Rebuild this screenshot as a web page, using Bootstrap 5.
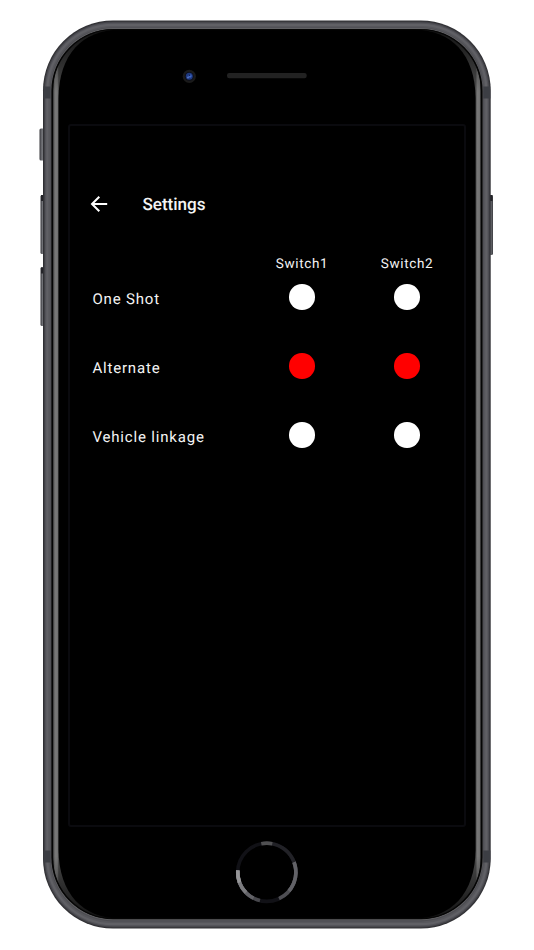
<!DOCTYPE html>
<html lang="en">
<head>
<meta charset="utf-8">
<meta name="viewport" content="width=device-width, initial-scale=1">
<title>Settings</title>
<link href="https://cdn.jsdelivr.net/npm/bootstrap@5.3.0/dist/css/bootstrap.min.css" rel="stylesheet">
<style>
body{font-family:Roboto,"Liberation Sans",sans-serif;background:#fff;color:#f4f4f4;text-rendering:geometricPrecision}
.phone{width:534px;height:950px}
.shell{z-index:0}
.screen{width:398px;height:703px;margin:123.5px 0 0 68px;border:2px solid #0a0a0e;border-radius:3px;z-index:1;padding-top:64px}
.topbar{height:28px;padding-left:18.5px;gap:34px}
.title{font-size:17.1px;font-weight:500;line-height:28px;margin:0;padding-top:2px;letter-spacing:-.03px}
.heads{height:20px;margin-top:35px;padding-left:179.5px;font-size:13.5px;letter-spacing:.66px;line-height:22px}
.cell{width:105px;flex:none}
.option{height:69px}
.option-list{margin-top:-9.8px}
.caption{width:179.5px;flex:none;padding:3.6px 0 0 22.4px;font-size:15px;letter-spacing:.82px;line-height:20px;white-space:nowrap}
.dot{width:25.5px;height:25.5px;background:#fff;border:0;padding:0}
.dot.on{background:#f00}
</style>
<script src="https://cdn.jsdelivr.net/npm/bootstrap@5.3.0/dist/js/bootstrap.bundle.min.js"></script>
</head>
<body>
<div class="phone position-relative overflow-hidden">
<svg class="shell position-absolute top-0 start-0" width="534" height="950" viewBox="0 0 534 950" aria-hidden="true">
<defs>
<linearGradient id="lip" gradientUnits="userSpaceOnUse" x1="53" y1="0" x2="481.5" y2="0"><stop offset="0" stop-color="#444"/><stop offset=".005" stop-color="#777"/><stop offset=".010" stop-color="#777"/><stop offset=".0135" stop-color="#484848"/><stop offset=".9865" stop-color="#4b4b4b"/><stop offset=".990" stop-color="#777"/><stop offset=".995" stop-color="#747474"/><stop offset="1" stop-color="#444"/></linearGradient>
<linearGradient id="fade" x1="0" x2="0" y1="0" y2="1"><stop offset="0" stop-opacity=".75"/><stop offset=".025" stop-opacity=".5"/><stop offset=".07" stop-opacity="0"/><stop offset=".93" stop-opacity="0"/><stop offset=".975" stop-opacity=".5"/><stop offset="1" stop-opacity=".75"/></linearGradient>
<linearGradient id="key" x1="0" x2="1" y1="0" y2="0"><stop offset="0" stop-color="#35353a"/><stop offset=".45" stop-color="#77787d"/><stop offset="1" stop-color="#3b3c40"/></linearGradient>
</defs>
<g fill="url(#key)">
<rect x="39.5" y="128.5" width="6" height="32" rx="1.5"/>
<rect x="40.5" y="195" width="5" height="59" rx="1.5"/>
<rect x="40.5" y="267" width="5" height="59" rx="1.5"/>
<rect x="488" y="195" width="5" height="60" rx="1.5"/>
</g>
<g fill="#242429"><rect x="41" y="195" width="3" height="6"/><rect x="41" y="267.5" width="3" height="6"/><rect x="490" y="195" width="2.5" height="6"/></g>
<rect x="43" y="20.5" width="447.7" height="908" rx="70" fill="#303034"/>
<rect x="44" y="21.5" width="445.7" height="906" rx="69" fill="#404045"/>
<rect x="45" y="22.5" width="443.7" height="904" rx="68" fill="#525258"/>
<rect x="46.2" y="23.7" width="441.3" height="901.6" rx="66.8" fill="#606065"/>
<rect x="48.4" y="25.9" width="436.9" height="897.2" rx="64.6" fill="#57575c"/>
<rect x="50" y="27.4" width="433.7" height="894" rx="63" fill="#4d4d52"/>
<rect x="50.8" y="28.1" width="432.1" height="892.2" rx="62.4" fill="#606063"/>
<g fill="#3c3e44"><rect x="43.5" y="86.5" width="7" height="12"/><rect x="483.3" y="86.5" width="7" height="12"/><rect x="43.5" y="850.5" width="7" height="12"/><rect x="483.3" y="850.5" width="7" height="12"/></g>
<rect x="51.3" y="29" width="431.3" height="890.2" rx="62" fill="#080808"/>
<rect x="53" y="29.8" width="427.8" height="888.6" rx="60" fill="url(#lip)"/>
<rect x="53" y="29.8" width="427.8" height="888.6" rx="60" fill="url(#fade)"/>
<path d="M58.5 98C59 55 82 29.6 121 29.6H413C452 29.6 475 55 475.6 98V850C475 893 452 918.6 413 918.6H121C82 918.6 59 893 58.5 850Z" fill="#000"/>
<rect x="52.6" y="29.8" width="428.7" height="888.6" rx="60.7" fill="none" stroke="#050505" stroke-width="1.1"/>
<circle cx="189.3" cy="76.3" r="6.6" fill="#1a1a1a"/><circle cx="189.3" cy="76.3" r="4.4" fill="#0b0d1a"/><circle cx="189.3" cy="76.3" r="3.5" fill="#1f397e"/><circle cx="190" cy="76" r="1.7" fill="#3d66c5"/><circle cx="188" cy="77.6" r="1" fill="#5674c0"/><circle cx="189.5" cy="75.2" r=".9" fill="#152655"/>
<rect x="227" y="73" width="79.7" height="5.2" rx="2.2" fill="#222"/>
<g fill="none" stroke-width="3.6">
<circle cx="266.8" cy="872.3" r="29.1" stroke="#111116"/>
<path d="M294 862A29.1 29.1 0 0 1 279 898.7" stroke="#4e4e53"/>
<path d="M294 862A29.1 29.1 0 0 1 289 891" stroke="#626267"/>
<path d="M237.8 870.3A29.1 29.1 0 0 0 260 900.6" stroke="#48484d"/>
<path d="M237.8 870.3A29.1 29.1 0 0 0 253.5 898.2" stroke="#626267"/>
<path d="M237.8 870.3A29.1 29.1 0 0 0 246 892.6" stroke="#7b7b7e"/>
<path d="M237.8 870.3A29.1 29.1 0 0 0 239.6 882.5" stroke="#969698"/>
<path d="M272 843.7A29.1 29.1 0 0 1 294 862" stroke="#222227"/>
<path d="M261.3 843.7A29.1 29.1 0 0 1 272.3 843.7" stroke="#505052"/>
</g>
</svg>
<div class="d-flex">
<main class="screen position-relative">
<header class="topbar d-flex align-items-center">
<button class="btn p-0 border-0 d-flex" type="button" aria-label="Back"><svg width="20" height="20" viewBox="0 0 20 20" fill="none" stroke="#fff" stroke-width="2"><path d="M18.2 10H3M10.3 2.7 3 10 10.3 17.3"/></svg></button>
<h1 class="title">Settings</h1>
</header>
<div class="heads d-flex"><div class="cell text-center">Switch1</div><div class="cell text-center">Switch2</div></div>
<div class="option-list">
<div class="option d-flex align-items-center"><div class="caption">One Shot</div><div class="cell d-flex justify-content-center"><button class="dot rounded-circle" aria-label="Switch 1 one shot"></button></div><div class="cell d-flex justify-content-center"><button class="dot rounded-circle" aria-label="Switch 2 one shot"></button></div></div>
<div class="option d-flex align-items-center"><div class="caption">Alternate</div><div class="cell d-flex justify-content-center"><button class="dot on rounded-circle" aria-label="Switch 1 alternate"></button></div><div class="cell d-flex justify-content-center"><button class="dot on rounded-circle" aria-label="Switch 2 alternate"></button></div></div>
<div class="option d-flex align-items-center"><div class="caption">Vehicle linkage</div><div class="cell d-flex justify-content-center"><button class="dot rounded-circle" aria-label="Switch 1 vehicle linkage"></button></div><div class="cell d-flex justify-content-center"><button class="dot rounded-circle" aria-label="Switch 2 vehicle linkage"></button></div></div>
</div>
</main>
</div>
</div>
</body>
</html>
